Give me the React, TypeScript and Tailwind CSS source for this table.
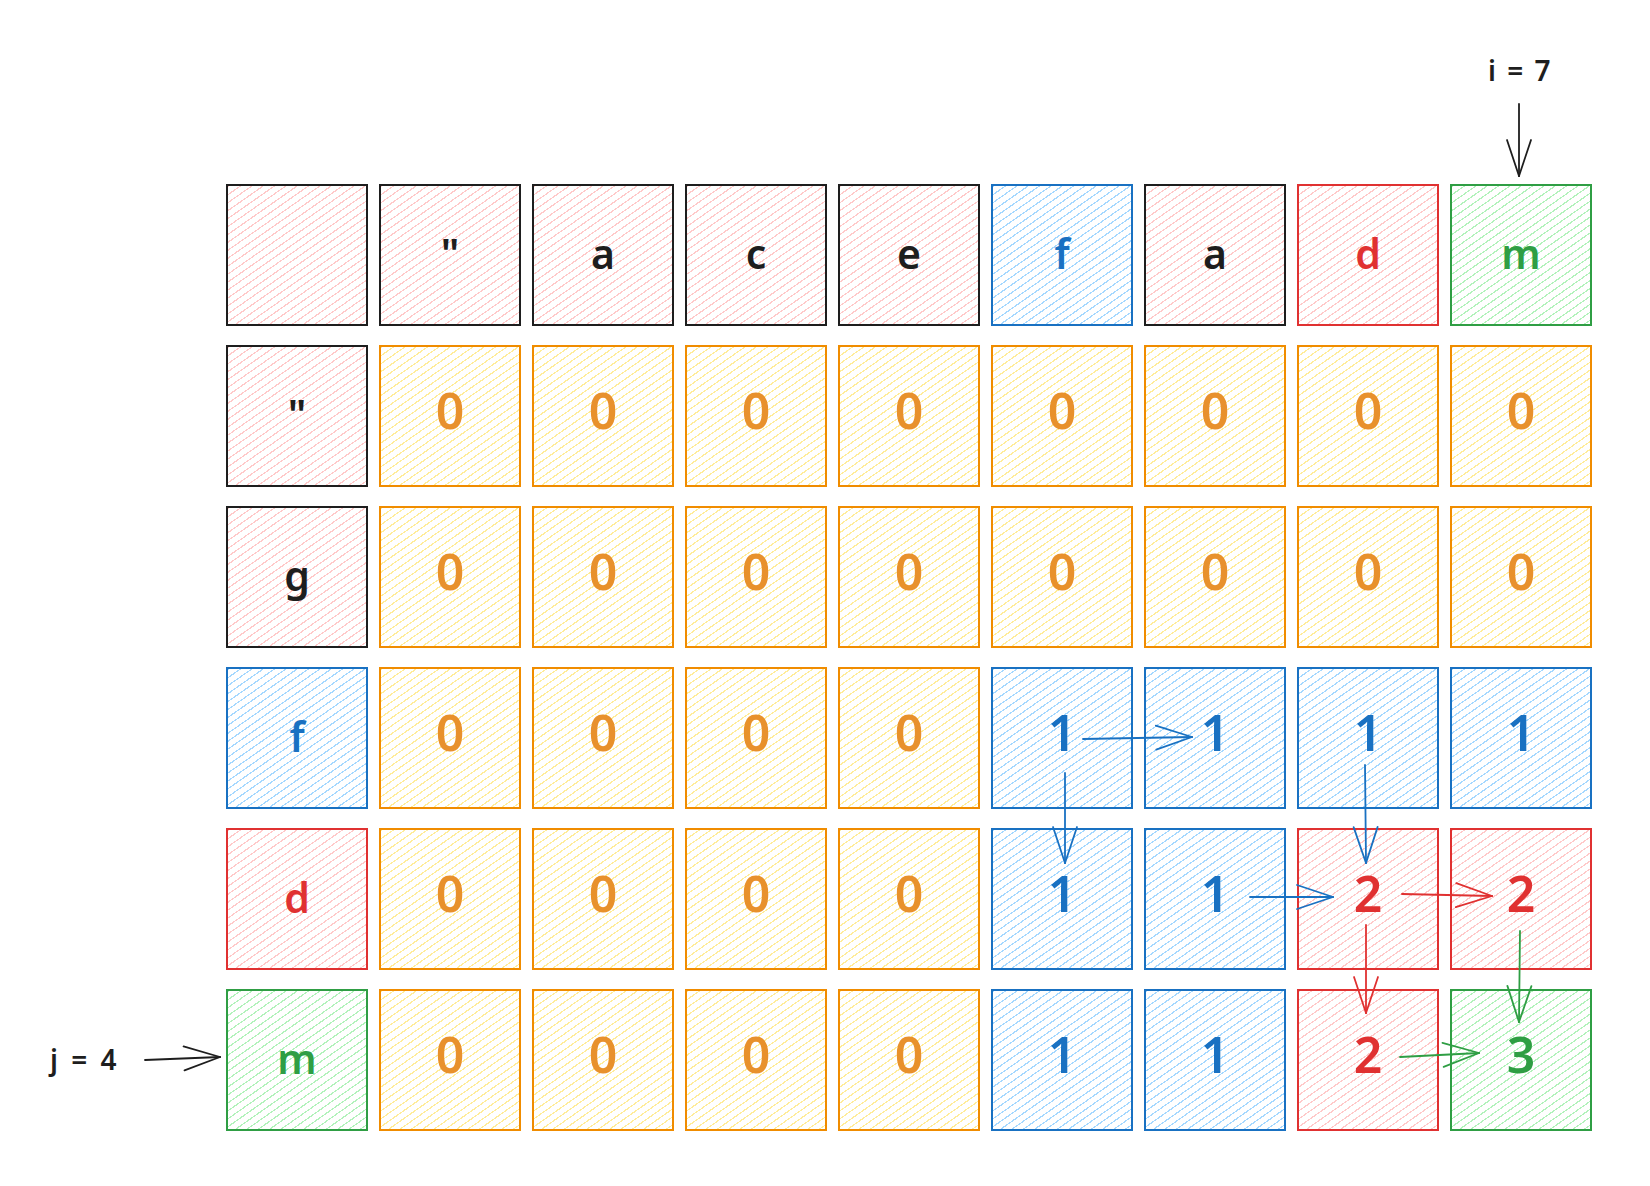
import React from "react";

type Kind = "k" | "b" | "r" | "g" | "y";

const BOX: Record<Kind, string> = {
  k: "border-[#1e1e1e] bg-[image:repeating-linear-gradient(145deg,#ffc9c9_0px,#ffc9c9_1.2px,transparent_1.2px,transparent_6.5px)]",
  b: "border-[#1971c2] bg-[image:repeating-linear-gradient(145deg,#a5d8ff_0px,#a5d8ff_1.2px,transparent_1.2px,transparent_6.5px)]",
  r: "border-[#e03131] bg-[image:repeating-linear-gradient(145deg,#ffc9c9_0px,#ffc9c9_1.2px,transparent_1.2px,transparent_6.5px)]",
  g: "border-[#2f9e44] bg-[image:repeating-linear-gradient(145deg,#b2f2bb_0px,#b2f2bb_1.2px,transparent_1.2px,transparent_6.5px)]",
  y: "border-[#f08c00] bg-[image:repeating-linear-gradient(145deg,#ffec99_0px,#ffec99_1.2px,transparent_1.2px,transparent_6.5px)]",
};

const TXT: Record<Kind, string> = {
  k: "text-[#1e1e1e]",
  b: "text-[#1971c2]",
  r: "text-[#e03131]",
  g: "text-[#2f9e44]",
  y: "text-[#e8912c]",
};

const rows: [string, Kind][][] = [
  [["", "k"], ["\"", "k"], ["a", "k"], ["c", "k"], ["e", "k"], ["f", "b"], ["a", "k"], ["d", "r"], ["m", "g"]],
  [["\"", "k"], ["0", "y"], ["0", "y"], ["0", "y"], ["0", "y"], ["0", "y"], ["0", "y"], ["0", "y"], ["0", "y"]],
  [["g", "k"], ["0", "y"], ["0", "y"], ["0", "y"], ["0", "y"], ["0", "y"], ["0", "y"], ["0", "y"], ["0", "y"]],
  [["f", "b"], ["0", "y"], ["0", "y"], ["0", "y"], ["0", "y"], ["1", "b"], ["1", "b"], ["1", "b"], ["1", "b"]],
  [["d", "r"], ["0", "y"], ["0", "y"], ["0", "y"], ["0", "y"], ["1", "b"], ["1", "b"], ["2", "r"], ["2", "r"]],
  [["m", "g"], ["0", "y"], ["0", "y"], ["0", "y"], ["0", "y"], ["1", "b"], ["1", "b"], ["2", "r"], ["3", "g"]],
];

function Cell({ v, k }: { v: string; k: Kind }) {
  const isDigit = /[0-9]/.test(v);
  return (
    <div
      className={`w-[142px] h-[142px] border-2 flex items-center justify-center ${isDigit ? "pb-[12px]" : "pb-[4px]"} ${BOX[k]}`}
    >
      <span
        className={`leading-none font-semibold ${isDigit ? "text-[50px]" : "text-[41px]"} ${TXT[k]}`}
      >
        {v}
      </span>
    </div>
  );
}

type Arrow = { x1: number; y1: number; x2: number; y2: number; c: string };

const arrows: Arrow[] = [
  { x1: 1519, y1: 104, x2: 1519, y2: 176, c: "#1e1e1e" },
  { x1: 145, y1: 1060, x2: 220, y2: 1057, c: "#1e1e1e" },
  { x1: 1083, y1: 739, x2: 1192, y2: 737, c: "#1971c2" },
  { x1: 1065, y1: 773, x2: 1065, y2: 863, c: "#1971c2" },
  { x1: 1250, y1: 897, x2: 1333, y2: 897, c: "#1971c2" },
  { x1: 1365, y1: 765, x2: 1366, y2: 863, c: "#1971c2" },
  { x1: 1402, y1: 894, x2: 1492, y2: 896, c: "#e03131" },
  { x1: 1366, y1: 925, x2: 1366, y2: 1013, c: "#e03131" },
  { x1: 1520, y1: 931, x2: 1519, y2: 1022, c: "#2f9e44" },
  { x1: 1400, y1: 1057, x2: 1479, y2: 1053, c: "#2f9e44" },
];

function ArrowPath({ a }: { a: Arrow }) {
  const dx = a.x2 - a.x1;
  const dy = a.y2 - a.y1;
  const len = Math.hypot(dx, dy);
  const ux = dx / len;
  const uy = dy / len;
  const back = 36;
  const half = 12;
  const bx = a.x2 - ux * back;
  const by = a.y2 - uy * back;
  const px = -uy;
  const py = ux;
  return (
    <g stroke={a.c} strokeWidth={1.8} strokeLinecap="round" fill="none">
      <line x1={a.x1} y1={a.y1} x2={a.x2} y2={a.y2} />
      <line x1={bx + px * half} y1={by + py * half} x2={a.x2} y2={a.y2} />
      <line x1={bx - px * half} y1={by - py * half} x2={a.x2} y2={a.y2} />
    </g>
  );
}

export default function App() {
  return (
    <div className="relative w-[1650px] h-[1186px] bg-white overflow-hidden font-['Noto_Sans',sans-serif]">
      <div className="pl-[226px] pt-[184px]">
        <div className="grid grid-cols-[repeat(9,142px)] gap-x-[11px] gap-y-[19px]">
          {rows.map((r, i) =>
            r.map(([v, k], j) => <Cell key={`${i}-${j}`} v={v} k={k} />)
          )}
        </div>
      </div>
      <div className="absolute left-[1488px] top-[56px] text-[28px] leading-none font-semibold tracking-[2px] text-[#1e1e1e] whitespace-nowrap">
        i = 7
      </div>
      <div className="absolute left-[50px] top-[1045px] text-[28px] leading-none font-semibold tracking-[3px] text-[#1e1e1e] whitespace-nowrap">
        j = 4
      </div>
      <svg className="absolute inset-0 pointer-events-none" width={1650} height={1186}>
        {arrows.map((a, i) => (
          <ArrowPath key={i} a={a} />
        ))}
      </svg>
    </div>
  );
}
